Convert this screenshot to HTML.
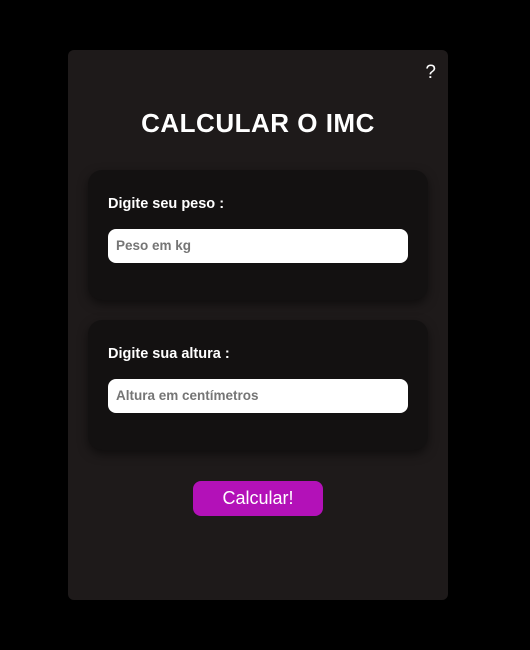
<!DOCTYPE html>
<html><head><meta charset="utf-8"><style>
body{margin:0;width:530px;height:650px;background:#000;position:relative;overflow:hidden;font-family:"Liberation Sans",sans-serif}
.box{position:absolute;left:68px;top:50px;width:380px;height:550px;background:#1e1a1a;border-radius:6px}
.q{position:absolute;right:12px;top:12px;color:#fff;font-size:19px}
h1{position:absolute;left:0;width:380px;top:58px;margin:0;text-align:center;color:#fff;font-size:26px;font-weight:bold;letter-spacing:0.5px}
.card{position:absolute;left:20px;width:340px;height:130px;background:#131111;border-radius:14px;box-shadow:0 4px 10px rgba(0,0,0,.5)}
.card label{position:absolute;left:20px;top:26px;color:#fff;font-weight:bold;font-size:14.5px}
.card .in{position:absolute;left:20px;top:59px;width:300px;height:34px;background:#fff;border-radius:8px;color:#757575;font-weight:bold;font-size:13.5px;line-height:34px;box-sizing:border-box;padding-left:8px}
.btn{position:absolute;left:125px;top:431px;width:130px;height:35px;background:#b311b8;border-radius:8px;color:#fff;font-size:18px;text-align:center;line-height:35px}
</style></head><body>
<div class="box">
<div class="q">?</div>
<h1>CALCULAR O IMC</h1>
<div class="card" style="top:120px"><label>Digite seu peso :</label><div class="in">Peso em kg</div></div>
<div class="card" style="top:270px"><label>Digite sua altura :</label><div class="in">Altura em centímetros</div></div>
<div class="btn">Calcular!</div>
</div>
</body></html>
